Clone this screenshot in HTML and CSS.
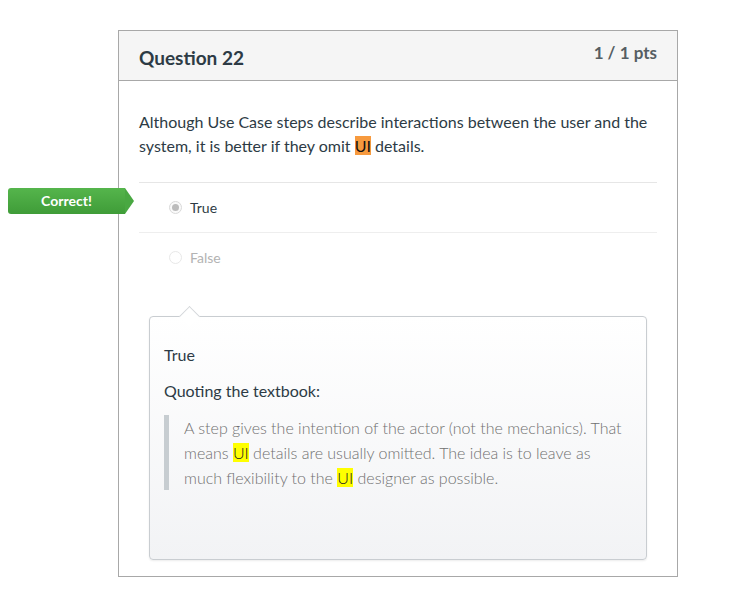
FILE: index.html
```html
<!DOCTYPE html>
<html>
<head>
<meta charset="utf-8">
<link rel="stylesheet" href="styles.css">
</head>
<body>
<div class="page">
  <div class="question">
    <div class="q-header">
      <h2 class="q-title">Question 22</h2>
      <div class="q-pts">1 / 1 pts</div>
    </div>
    <div class="q-body">
      <p class="q-text">Although Use Case steps describe interactions between the user and the system, it is better if they omit <span class="hl-orange">UI</span> details.</p>
      <div class="answers">
        <div class="answer correct">
          <span class="badge">Correct!</span>
          <span class="radio checked"></span>
          <span class="ans-label">True</span>
        </div>
        <div class="answer faded">
          <span class="radio"></span>
          <span class="ans-label">False</span>
        </div>
      </div>
      <div class="feedback">
        <p class="fb-answer">True</p>
        <p class="fb-lead">Quoting the textbook:</p>
        <blockquote class="fb-quote">A step gives the intention of the actor (not the mechanics). That means <span class="hl-yellow">UI</span> details are usually omitted. The idea is to leave as much flexibility to the <span class="hl-yellow">UI</span> designer as possible.</blockquote>
      </div>
    </div>
  </div>
</div>
</body>
</html>
```
FILE: styles.css
```css
* { box-sizing: border-box; }
html, body { margin: 0; padding: 0; background: #fff; }
body {
  font-family: Lato, "Open Sans", "Liberation Sans", sans-serif;
  color: #2d3b45;
}
.page { padding: 30px 0 0 118px; }
.question {
  width: 560px;
  border: 1px solid #a8a8a8;
  background: #fff;
}
.q-header {
  height: 50px;
  background: #f5f5f5;
  border-bottom: 1px solid #a8a8a8;
  display: flex;
  justify-content: space-between;
  align-items: flex-start;
  padding: 0 20px 0 20px;
}
.q-title {
  margin: 15px 0 0 0;
  font-size: 19px;
  font-weight: 700;
  line-height: 24px;
  color: #2d3b45;
}
.q-pts {
  margin-top: 11px;
  font-size: 17px;
  font-weight: 700;
  line-height: 22px;
  color: #565e63;
}
.q-body { padding: 29px 20px 16px 20px; }
.q-text {
  margin: 0 0 24px 0;
  font-size: 16px;
  line-height: 24px;
}
.hl-orange { background: #f79a3e; color: #111; }
.hl-yellow { background: #ffff00; color: #222; }
.answers { border-top: 1px solid #e6e6e6; }
.answer {
  position: relative;
  height: 49px;
  display: flex;
  align-items: center;
  padding-left: 30px;
  font-size: 14px;
}
.answer + .answer { border-top: 1px solid #eeeeee; }
.answer.faded { color: #b3b3b3; }
.radio {
  width: 13px;
  height: 13px;
  border-radius: 50%;
  border: 1px solid #d9d9d9;
  background: #fafafa;
  margin-right: 8px;
  position: relative;
  flex: none;
}
.answer.faded .radio { border-color: #e8e8e8; background: #fff; }
.radio.checked::after {
  content: "";
  position: absolute;
  left: 2px; top: 2px;
  width: 7px; height: 7px;
  border-radius: 50%;
  background: #bcbcbc;
}
.badge {
  position: absolute;
  left: -131px;
  top: 5px;
  width: 117px;
  height: 26px;
  background: linear-gradient(#55b54c, #3f9c38);
  border-radius: 3px 0 0 3px;
  color: #fff;
  font-weight: 700;
  font-size: 14px;
  line-height: 26px;
  text-align: center;
}
.badge::after {
  content: "";
  position: absolute;
  right: -9px;
  top: 0;
  width: 0; height: 0;
  border-top: 13px solid transparent;
  border-bottom: 13px solid transparent;
  border-left: 9px solid #49a842;
}
.feedback {
  position: relative;
  margin: 35px 10px 0 10px;
  height: 244px;
  border: 1px solid #c9cdd1;
  border-radius: 4px;
  background: linear-gradient(#ffffff, #f2f3f5);
  padding: 26px 15px 0 14px;
  box-shadow: 0 1px 2px rgba(0,0,0,0.08);
}
.feedback::before {
  content: "";
  position: absolute;
  left: 32px;
  top: -8px;
  width: 14px;
  height: 14px;
  background: #fff;
  border-left: 1px solid #d4d7da;
  border-top: 1px solid #d4d7da;
  transform: rotate(45deg);
}
.fb-answer {
  margin: 0 0 12px 0;
  font-size: 16px;
  line-height: 24px;
}
.fb-lead {
  margin: 0 0 12px 0;
  font-size: 16px;
  line-height: 24px;
}
.fb-quote {
  margin: 0;
  border-left: 5px solid #c7cdd1;
  padding: 0 0 0 15px;
  font-size: 16px;
  line-height: 25px;
  font-weight: 300;
  color: #707070;
}
```
